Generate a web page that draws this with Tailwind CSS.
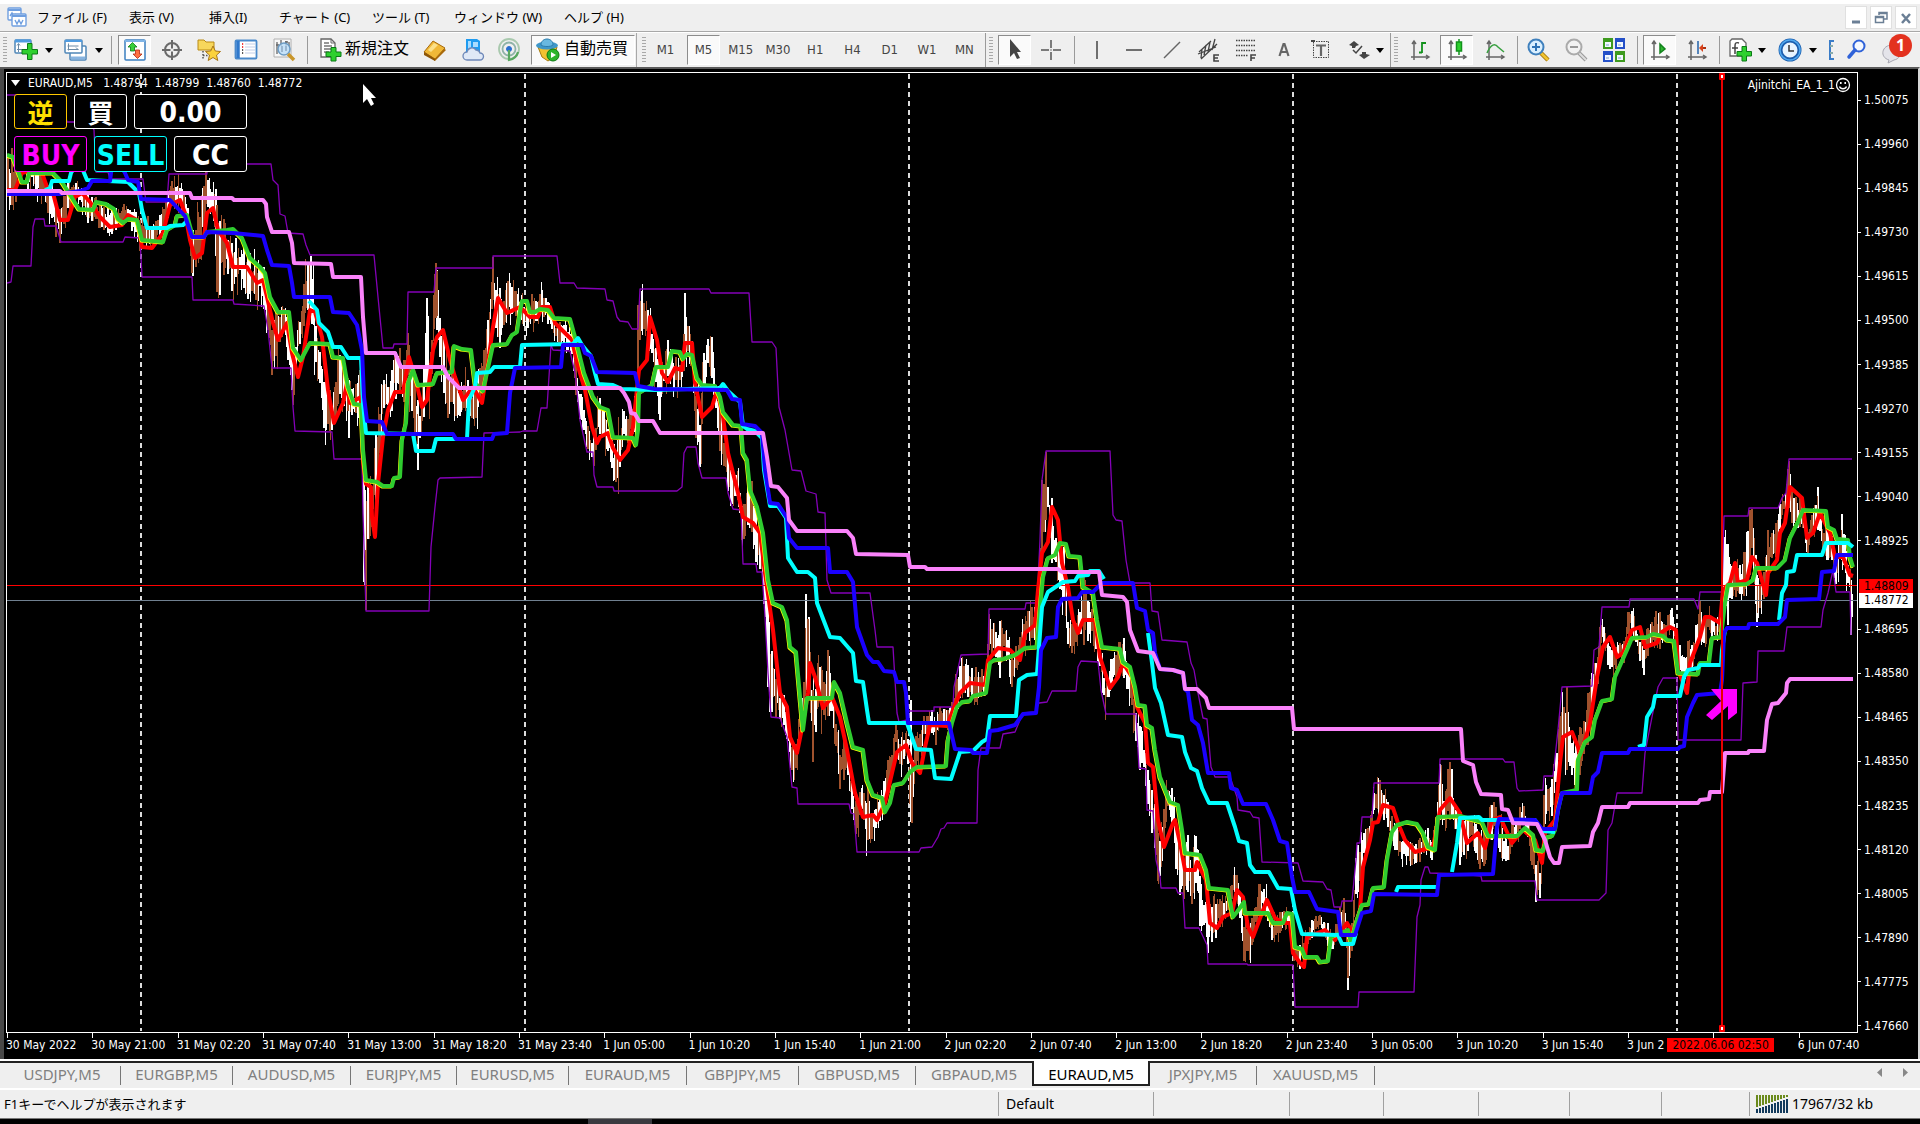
<!DOCTYPE html>
<html lang="ja">
<head>
  <meta charset="UTF-8">
  <meta name="viewport" content="width=device-width, initial-scale=1.0">
  <title>EURAUD,M5</title>
  <script src="https://cdn.jsdelivr.net/npm/@tailwindcss/browser@4"></script>
</head>
<body class="h-screen flex flex-col overflow-hidden bg-[#efefef] text-black font-['Noto_Sans','Noto_Sans_CJK_JP',sans-serif]">

  <!-- Menu bar -->
  <header class="flex items-center justify-between h-[31px] shrink-0 border-t-4 border-white pl-[7px] pr-[3px]">
    <nav class="flex items-center text-[13px] leading-[18px] whitespace-nowrap -mt-0.5">
      <svg class="w-5 h-5 mr-[10px]" viewBox="0 0 20 20" fill="#fff" stroke="#6f9fe0" stroke-width="1.4">
        <rect x="1" y="1" width="13" height="12" rx="1"/><path d="M1 3h13" stroke-width="2"/><path d="M3 9l2-3 2 4 2-3" fill="none"/>
        <rect x="5" y="7" width="14" height="12" rx="1"/><path d="M5 9h14" stroke-width="2"/><path d="M8 13l2 4 2-4 2 4 2-4" fill="none"/>
      </svg>
      <a href="#" class="w-[92px]">ファイル (F)</a>
      <a href="#" class="w-[80px]">表示 (V)</a>
      <a href="#" class="w-[70px]">挿入(I)</a>
      <a href="#" class="w-[93px]">チャート (C)</a>
      <a href="#" class="w-[82px]">ツール (T)</a>
      <a href="#" class="w-[110px]">ウィンドウ (W)</a>
      <a href="#">ヘルプ (H)</a>
    </nav>
    <div class="flex gap-[3px]">
      <button aria-label="Minimize" class="w-[22px] h-[23px] bg-white border border-[#e0e0e0] flex items-center justify-center"><svg class="w-4 h-4" viewBox="0 0 16 16"><path d="M4 12h8" stroke="#6b7f95" stroke-width="3"/></svg></button>
      <button aria-label="Restore" class="w-[22px] h-[23px] bg-white border border-[#e0e0e0] flex items-center justify-center"><svg class="w-4 h-4" viewBox="0 0 16 16" fill="none" stroke="#6b7f95" stroke-width="1.5"><path d="M6 5V2.500h8V9h-3M6 3.500h8M2.500 6.500h8v6h-8zM2.500 7.500h8"/></svg></button>
      <button aria-label="Close" class="w-[22px] h-[23px] bg-white border border-[#e0e0e0] flex items-center justify-center"><svg class="w-4 h-4" viewBox="0 0 16 16"><path d="M4 4l8 9M12 4l-8 9" stroke="#6b7f95" stroke-width="2.500"/></svg></button>
    </div>
  </header>

  <!-- Toolbar -->
  <div class="flex items-center h-[36px] shrink-0 border-t border-[#a8a8a8] shadow-[inset_0_1px_0_#fff] overflow-hidden">
    <span class="ml-[3px] w-1 h-[26px] bg-[repeating-linear-gradient(#a8a8a8_0_1px,#efefef_1px_3px)]"></span>
    <button aria-label="New chart" class="w-[38px] shrink-0 flex justify-center">
      <svg class="w-6 h-6" viewBox="0 0 24 24"><rect x="1" y="2" width="16" height="13" rx="1" fill="#fff" stroke="#4f86b8" stroke-width="1.500"/><path d="M1 3h16" stroke="#4f9be0" stroke-width="3"/><path d="M4.500 6v8M3 11.500h12M3 7.500l1.500-2 1.500 2" stroke="#6c8aa5" fill="none"/><path d="M13.500 5.500h4.500v6h5.500V16H18v5.500h-4.500V16H8v-4.500h5.500z" fill="#2fd02f" stroke="#0b7a16"/></svg>
    </button>
    <svg class="w-2 h-2 shrink-0" viewBox="0 0 8 8"><path d="M0 2h8L4 7z"/></svg>
    <button aria-label="Profiles" class="ml-1 w-[38px] shrink-0 flex justify-center">
      <svg class="w-6 h-6" viewBox="0 0 24 24" fill="#fff" stroke="#4f86b8" stroke-width="1.500"><rect x="6" y="8" width="16" height="14" rx="1"/><path d="M7 20h14" stroke="#88b4e0" stroke-width="3"/><rect x="1" y="2" width="17" height="13" rx="1"/><path d="M1 3h17" stroke="#4f9be0" stroke-width="2"/><path d="M4.500 5.500v7M3.500 8h11M3.500 11.500h11M12 9.500l2 2" stroke="#6c8aa5" stroke-width="1" fill="none"/></svg>
    </button>
    <svg class="w-2 h-2 shrink-0" viewBox="0 0 8 8"><path d="M0 2h8L4 7z"/></svg>
    <span class="ml-2 w-px h-[28px] bg-[#9a9a9a]"></span>
    <button aria-label="Market watch" class="ml-1.5 w-[33px] h-[30px] shrink-0 flex items-center justify-center bg-[#fafafa] border border-white border-t-[#8c8c8c] border-l-[#8c8c8c]">
      <svg class="w-6 h-6" viewBox="0 0 24 24"><rect x="2" y="2" width="20" height="20" rx="1" fill="#fff" stroke="#3b7fc0" stroke-width="1.500"/><path d="M2 3h20" stroke="#7fb4e6" stroke-width="2"/><path d="M9.500 4.500l4.500 4.500h-2.500v4h-4V9H5z" fill="#3ad03a" stroke="#0c7a16" stroke-width=".8"/><path d="M14.500 20.500l4.500-4.500h-2.500v-4h-4v4H10z" fill="#ff7040" stroke="#b32b10" stroke-width=".8"/></svg>
    </button>
    <button aria-label="Data window" class="ml-0.5 w-[38px] shrink-0 flex justify-center">
      <svg class="w-6 h-6" viewBox="0 0 24 24" fill="none" stroke="#6a6a6a" stroke-width="2"><circle cx="12" cy="12" r="7"/><path d="M12 2v8.500M12 13.500V22M2 12h8.500M13.500 12H22"/></svg>
    </button>
    <button aria-label="Navigator" class="w-[36px] shrink-0 flex justify-center">
      <svg class="w-6 h-6" viewBox="0 0 24 24"><path d="M1 2h6l2 2h8v8H1z" fill="#f7d75c" stroke="#b98a14"/><path d="M6 13v9M6 17.500h5" stroke="#555" stroke-width="1.500" stroke-dasharray="1.500 1.500"/><path d="M16 8l2.300 5 5.200.5-4 3.600 1.300 5.400-4.800-3-4.800 3 1.300-5.400-4-3.600 5.200-.5z" fill="#fbd23c" stroke="#a8761a"/></svg>
    </button>
    <button aria-label="Terminal" class="w-[38px] shrink-0 flex justify-center">
      <svg class="w-6 h-6" viewBox="0 0 24 24"><rect x="1.500" y="2.500" width="21" height="18" rx="1" fill="#fff" stroke="#4a8acb" stroke-width="1.800"/><path d="M4 3v17" stroke="#2f79cc" stroke-width="3.500"/><path d="M8 6h1.200M8 9h1.200" stroke="#e00" stroke-width="1.500"/><path d="M8 12h1.200M8 15h1.200" stroke="#222" stroke-width="1.500"/><path d="M11 6h10M11 9h10M11 12h10M11 15h10" stroke="#c3cfe8"/></svg>
    </button>
    <button aria-label="Strategy tester" class="w-[38px] shrink-0 flex justify-center">
      <svg class="w-6 h-6" viewBox="0 0 24 24"><path d="M2 1h17v18H2z" fill="#f8f8f8" stroke="#b0b0b0"/><path d="M5 4v12M9 2v6M14 3v5M17 4v4M4 7h3M13 4h3" stroke="#666" stroke-width="1.300"/><circle cx="12" cy="11" r="6" fill="#b9dcf7cc" stroke="#6d9cc4" stroke-width="1.500"/><path d="M10 8v6M14 8v5" stroke="#6f8ba8"/><path d="M16 16l6 6" stroke="#c9962a" stroke-width="3.500"/></svg>
    </button>
    <span class="ml-1 w-px h-[28px] bg-[#9a9a9a]"></span>
    <button class="ml-1 pl-1.5 w-[104px] shrink-0 flex items-center gap-[3px] text-[16px] leading-5 whitespace-nowrap">
      <svg class="w-6 h-6 shrink-0" viewBox="0 0 24 24"><path d="M3 1h10l4 4v14H3z" fill="#fff" stroke="#666" stroke-width="1.300"/><path d="M13 1v4h4" fill="none" stroke="#666"/><path d="M6 5h5M6 8h8M6 11h8M6 14h5" stroke="#777" stroke-width="1.500"/><path d="M13 9.500h5v4.500h5v4.500h-5V23h-5v-4.500H8V14h5z" fill="#2fd02f" stroke="#0b7a16"/></svg>
      <span class="-mt-1">新規注文</span>
    </button>
    <button aria-label="MetaEditor" class="w-[38px] shrink-0 flex justify-center">
      <svg class="w-6 h-6" viewBox="0 0 24 24"><path d="M1 14l11-10 11 8-11 11z" fill="#a8690a"/><path d="M1 14L10 3l12 7-10 11z" fill="#f0b838" stroke="#a86b0c"/><path d="M1 14l11 7v2L1 17z" fill="#8c5608"/><path d="M5 12l6-7 4 2-7 7z" fill="#fbe08a"/></svg>
    </button>
    <button aria-label="Cloud" class="w-[38px] shrink-0 flex justify-center">
      <svg class="w-6 h-6" viewBox="0 0 24 24"><path d="M5 1h11l3 2v12H5z" fill="#1e9bf0"/><path d="M7 3h3v11H7zM12 4h5v5h-5z" fill="#a9dcff"/><path d="M6 22a4 4 0 0 1 0-8 5 5 0 0 1 9-2 4 4 0 0 1 4 3 3.500 3.500 0 0 1 0 7z" fill="#dfe8f6" stroke="#6d87b8" stroke-width="1.300"/></svg>
    </button>
    <button aria-label="Signals" class="w-[34px] mr-1 shrink-0 flex justify-center">
      <svg class="w-6 h-6" viewBox="0 0 24 24" fill="none" stroke-width="1.800"><circle cx="12" cy="11" r="10" stroke="#a9c9ae"/><circle cx="12" cy="11" r="6.500" stroke="#8fb3a8"/><circle cx="12" cy="11" r="2.500" fill="#2a6fd0" stroke="#2a6fd0" stroke-width="1"/><path d="M12 12v10c5-1 8-4 9-8" stroke="#58a860" stroke-width="2.200"/></svg>
    </button>
    <button class="ml-px pl-1 w-[104px] h-[30px] shrink-0 flex items-center gap-1 text-[16px] leading-5 whitespace-nowrap bg-[#fafafa] border border-white border-t-[#8c8c8c] border-l-[#8c8c8c]">
      <svg class="w-6 h-6 shrink-0" viewBox="0 0 24 24"><path d="M2 9h19l-3 10-6 4-6-4z" fill="#f2c230" stroke="#a67c12"/><ellipse cx="11" cy="7.500" rx="11" ry="4" fill="#3f97c9"/><path d="M5 7c0-8 12-8 12 0-2 2-10 2-12 0z" fill="#69b8e0" stroke="#2c7dac"/><circle cx="17" cy="17" r="6" fill="#2cb52c" stroke="#0c7b12"/><path d="M15 14l5 3-5 3z" fill="#fff"/></svg>
      <span class="-mt-1">自動売買</span>
    </button>
    <span class="ml-px w-px h-[34px] bg-[#a8a8a8]"></span>
    <span class="ml-[5px] w-1 h-[26px] shrink-0 bg-[repeating-linear-gradient(#a8a8a8_0_1px,#efefef_1px_3px)]"></span>

    <div class="flex items-center shrink-0 text-[13px] text-[#444] font-['DejaVu_Sans_Condensed','DejaVu_Sans',sans-serif]">
      <button class="ml-px w-[37px] h-[30px]">M1</button>
      <button class="ml-[3px] w-[33px] h-[30px] bg-[#fafafa] border border-white border-t-[#8c8c8c] border-l-[#8c8c8c]">M5</button>
      <div class="ml-0.5 flex w-[261px]">
        <button class="flex-1">M15</button>
        <button class="flex-1">M30</button>
        <button class="flex-1">H1</button>
        <button class="flex-1">H4</button>
        <button class="flex-1">D1</button>
        <button class="flex-1">W1</button>
        <button class="flex-1">MN</button>
      </div>
    </div>
    <span class="ml-0.5 w-px h-[34px] bg-[#9a9a9a]"></span>
    <span class="ml-[3px] w-1 h-[26px] shrink-0 bg-[repeating-linear-gradient(#a8a8a8_0_1px,#efefef_1px_3px)]"></span>
    <button aria-label="Cursor" class="ml-[5px] w-[33px] h-[30px] shrink-0 flex items-center justify-center bg-[#fafafa] border border-white border-t-[#8c8c8c] border-l-[#8c8c8c]">
      <svg class="w-6 h-6" viewBox="0 0 24 24"><path d="M7 1v18l4-4 3 6 3-1-3-6h4z" fill="#444"/></svg>
    </button>
    <button aria-label="Crosshair" class="ml-px w-[38px] shrink-0 flex justify-center">
      <svg class="w-6 h-6" viewBox="0 0 24 24" stroke="#555" stroke-width="1.500"><path d="M12 2v8M12 14v8M2 12h8M14 12h8M11.500 12h1"/></svg>
    </button>
    <span class="ml-1 w-px h-[28px] bg-[#9a9a9a]"></span>
    <div class="ml-[3px] flex w-[262px] shrink-0">
      <button aria-label="Vertical line" class="flex-1 flex justify-center"><svg class="w-6 h-6" viewBox="0 0 24 24"><path d="M12 3v18" stroke="#444" stroke-width="1.500"/></svg></button>
      <button aria-label="Horizontal line" class="flex-1 flex justify-center"><svg class="w-6 h-6" viewBox="0 0 24 24"><path d="M4 12h16" stroke="#444" stroke-width="1.500"/></svg></button>
      <button aria-label="Trendline" class="flex-1 flex justify-center"><svg class="w-6 h-6" viewBox="0 0 24 24"><path d="M4 20L20 4" stroke="#666" stroke-width="1.500"/></svg></button>
      <button aria-label="Channel" class="flex-1 flex justify-center"><svg class="w-6 h-6" viewBox="0 0 24 24" fill="none" stroke="#444" stroke-width="1.300"><path d="M2 14L14 3M4 21L20 6M5 11l-1 9M9 7l-2 10M13 4l-2 10M18 1l-3 11M1 16l18-7" /><path d="M22 17h-5v6h5M17 20h4" stroke-width="1.600"/></svg></button>
      <button aria-label="Fibonacci" class="flex-1 flex justify-center"><svg class="w-6 h-6" viewBox="0 0 24 24" fill="none" stroke="#444" stroke-width="1.500"><path d="M2 2.500h19M2 7.500h19M2 12.500h19M2 17.500h12" stroke-dasharray="1.500 1"/><path d="M22 17h-5v6M17 20h4" stroke-width="1.600"/></svg></button>
      <button aria-label="Text" class="flex-1 flex justify-center"><svg class="w-6 h-6" viewBox="0 0 24 24" fill="none" stroke="#666" stroke-width="2.200"><path d="M7.500 18l4-12h1l4 12M9 14h6"/></svg></button>
      <button aria-label="Text label" class="flex-1 flex justify-center"><svg class="w-6 h-6" viewBox="0 0 24 24" fill="none" stroke="#444"><rect x="4.500" y="3.500" width="15" height="16" stroke-dasharray="1.500 1"/><path d="M2 2h4v2H2z" fill="#444" stroke="none"/><path d="M7 7.500h10M12 7.500V18" stroke="#666" stroke-width="2.200"/></svg></button>
    </div>
    <button aria-label="Arrows" class="ml-0.5 w-[34px] shrink-0 flex justify-center">
      <svg class="w-6 h-6" viewBox="0 0 24 24" fill="#444"><path d="M7 3l5 4-3 1-1 2H5V8L2 7z"/><path d="M17 21l-5-4 3-1v-2h4v2l4 1z"/><path d="M6 12l3 3 6-7" fill="none" stroke="#444" stroke-width="1.500"/></svg>
    </button>
    <svg class="w-2 h-2 shrink-0" viewBox="0 0 8 8"><path d="M0 2h8L4 7z"/></svg>
    <span class="ml-1.5 w-px h-[34px] bg-[#9a9a9a]"></span>
    <span class="ml-[3px] w-1 h-[26px] shrink-0 bg-[repeating-linear-gradient(#a8a8a8_0_1px,#efefef_1px_3px)]"></span>
    <button aria-label="Bar chart" class="ml-[3px] w-[38px] shrink-0 flex justify-center">
      <svg class="w-6 h-6" viewBox="0 0 24 24" fill="none" stroke="#666" stroke-width="1.500"><path d="M6 3v19M3 19h18M4 6l2-3 2 3M18 17l3 2-3 2"/><path d="M14 4v11M14 5h4M11 14.500h3" stroke="#12921c" stroke-width="1.800"/></svg>
    </button>
    <button aria-label="Candlesticks" class="ml-px w-[33px] h-[30px] shrink-0 flex items-center justify-center bg-[#fafafa] border border-white border-t-[#8c8c8c] border-l-[#8c8c8c]">
      <svg class="w-6 h-6" viewBox="0 0 24 24" fill="none" stroke="#666" stroke-width="1.500"><path d="M6 3v19M3 19h18M4 6l2-3 2 3M18 17l3 2-3 2"/><path d="M14 1v16" stroke="#12921c"/><rect x="11.500" y="4" width="5" height="9" fill="#2fd02f" stroke="#12921c"/></svg>
    </button>
    <button aria-label="Line chart" class="ml-[3px] w-[38px] shrink-0 flex justify-center">
      <svg class="w-6 h-6" viewBox="0 0 24 24" fill="none" stroke="#666" stroke-width="1.500"><path d="M6 3v19M3 19h18M4 6l2-3 2 3M18 17l3 2-3 2"/><path d="M4 15c4-9 8-10 11-6l6 5" stroke="#38a040"/></svg>
    </button>
    <span class="ml-[3px] w-px h-[28px] bg-[#9a9a9a]"></span>
    <button aria-label="Zoom in" class="ml-px w-[38px] shrink-0 flex justify-center">
      <svg class="w-6 h-6" viewBox="0 0 24 24"><path d="M15 15l7 7" stroke="#a67a12" stroke-width="4.500"/><path d="M15 15l7 7" stroke="#f0c430" stroke-width="2.500"/><circle cx="10" cy="9" r="7.500" fill="#d9efff" stroke="#3f80bd" stroke-width="2"/><path d="M10 5v8M6 9h8" stroke="#2f73b5" stroke-width="2"/></svg>
    </button>
    <button aria-label="Zoom out" class="w-[38px] shrink-0 flex justify-center">
      <svg class="w-6 h-6" viewBox="0 0 24 24"><path d="M15 15l7 7" stroke="#999" stroke-width="4"/><path d="M15 15l7 7" stroke="#ddd" stroke-width="2"/><circle cx="10" cy="9" r="7.500" fill="#f2f2f2" stroke="#aaa" stroke-width="2"/><path d="M6 9h8" stroke="#999" stroke-width="2"/></svg>
    </button>
    <button aria-label="Tile windows" class="w-[38px] shrink-0 flex justify-center">
      <svg class="w-6 h-6" viewBox="0 0 24 24"><path d="M1 0h10v11H1zM13 13h10v11H13z" fill="#3d9a1e"/><path d="M13 0h10v11H13zM1 13h10v11H1z" fill="#2450c8"/><path d="M3 4h6v5H3zM15 4h6v5h-6zM3 17h6v5H3zM15 17h6v5h-6z" fill="#f2f8ff"/><path d="M4 7h3M16 7h3M4 20h3M16 20h3" stroke="#7aa0c8"/></svg>
    </button>
    <span class="ml-1 w-px h-[28px] bg-[#9a9a9a]"></span>
    <button aria-label="Auto scroll" class="ml-[5px] w-[33px] h-[30px] shrink-0 flex items-center justify-center bg-[#fafafa] border border-white border-t-[#8c8c8c] border-l-[#8c8c8c]">
      <svg class="w-6 h-6" viewBox="0 0 24 24" fill="none" stroke="#666" stroke-width="1.500"><path d="M6 3v19M3 19h18M4 6l2-3 2 3M18 17l3 2-3 2"/><path d="M12 6l5 5-5 4z" fill="#2fb52f" stroke="#12821c"/></svg>
    </button>
    <button aria-label="Chart shift" class="ml-0.5 w-[38px] shrink-0 flex justify-center">
      <svg class="w-6 h-6" viewBox="0 0 24 24" fill="none" stroke="#666" stroke-width="1.500"><path d="M6 3v19M3 19h18M4 6l2-3 2 3M18 17l3 2-3 2"/><path d="M13 3v13" stroke="#2060a8"/><path d="M21 10h-4" stroke="#b03010" stroke-width="2"/><path d="M18 6l-4 4 4 4z" fill="#d8431c" stroke="none"/></svg>
    </button>
    <span class="ml-[3px] w-px h-[28px] bg-[#9a9a9a]"></span>
    <button aria-label="Indicators" class="ml-0.5 w-[36px] shrink-0 flex justify-center">
      <svg class="w-6 h-6" viewBox="0 0 24 24"><path d="M4 1h10l4 4v13H2V3z" fill="#fff" stroke="#666" stroke-width="1.300"/><path d="M11 5c-3-1-4 0-4 3v8M4 10h6" fill="none" stroke="#444" stroke-width="1.500"/><path d="M14 8.500h4.500v5h5V18h-5v5H14v-5H9v-4.500h5z" fill="#2fd02f" stroke="#0b7a16"/></svg>
    </button>
    <svg class="w-2 h-2 shrink-0" viewBox="0 0 8 8"><path d="M0 2h8L4 7z"/></svg>
    <button aria-label="Periods" class="ml-[5px] w-[38px] shrink-0 flex justify-center">
      <svg class="w-6 h-6" viewBox="0 0 24 24"><circle cx="12" cy="12" r="9.500" fill="#e8f5ff" stroke="#1c5fae" stroke-width="4"/><circle cx="12" cy="12" r="10" fill="none" stroke="#4fa8ee" stroke-width="1.500"/><path d="M11 7v6h5" fill="none" stroke="#333" stroke-width="1.500"/></svg>
    </button>
    <svg class="w-2 h-2 shrink-0" viewBox="0 0 8 8"><path d="M0 2h8L4 7z"/></svg>
    <button aria-label="Templates" class="ml-[10px] w-2 shrink-0">
      <svg class="w-2 h-6" viewBox="0 0 8 24" fill="none" stroke="#3a7cc8" stroke-width="2"><path d="M7 3H3v18h4"/><path d="M3 8h3M3 15h3" stroke="#8aa"/></svg>
    </button>
    <button aria-label="Search" class="ml-[3px] w-[38px] shrink-0 flex justify-center">
      <svg class="w-6 h-6" viewBox="0 0 24 24"><circle cx="14" cy="8" r="5.500" fill="#f4f8ff" stroke="#2f62d8" stroke-width="2"/><path d="M10 12l-6 7" stroke="#2f62d8" stroke-width="3.500" stroke-linecap="round"/></svg>
    </button>
    <button aria-label="Messages" class="relative w-[40px] h-[32px] shrink-0">
      <svg class="w-[30px] h-[32px] ml-1" viewBox="0 0 30 32"><path d="M12 11c10 0 12 13 2 15l-6 3 1-3c-10-3-7-15 3-15z" fill="#e4e4ea" stroke="#a8a8b2"/></svg>
      <span class="absolute left-[13px] top-0 size-[23px] rounded-full bg-[#e3321f] text-white text-base leading-[22px] font-bold text-center">1</span>
    </button>
  </div>

  <!-- Chart window -->
  <main class="relative flex-1 min-h-0 flex flex-col bg-black border-t-2 border-t-[#5a5a5a] border-r-2 border-r-[#d8d8d8] pt-[3px] text-white text-[12px] leading-[14px] font-['DejaVu_Sans_Condensed','DejaVu_Sans',sans-serif]">
    <span class="absolute left-0 top-0 bottom-0 w-1 bg-[#484848]"></span>
    <div class="flex flex-1 min-h-0 pl-1.5">
      <div class="relative flex-1 min-w-0 border border-white">
        <svg class="absolute inset-0 w-full h-full" viewBox="7 73 1850 959" preserveAspectRatio="none" fill="none" stroke-linejoin="round">
          <path d="M141 74V1031M525 74V1031M909 74V1031M1293 74V1031M1677 74V1031" stroke="#dcdcdc" stroke-width="2" stroke-dasharray="5 4"/>
          <g shape-rendering="crispEdges">
            <path id="bear" stroke="#fff" stroke-width="1.500"/>
            <path id="bull" stroke="#a0522d" stroke-width="1.500"/>
            <path d="M7 600.500H1857" stroke="#708090"/>
            <path d="M7 585.500H1857" stroke="#ff0000"/>
          </g>
          <g stroke="#8400b8" stroke-width="1.300">
            <polyline points="7,95 60,95 67,122 75,122 90,122 94,130 96,172 108,172 110,179 143,179 146,202 167,202 169,174 207,174 207,164 271,164 273,180 278,185 280,214 285,216 288,233 303,234 306,245 310,255 374,255 378,297 383,348 393,348 394,344 407,344 408,292 434,292 436,268 493,268 493,256 557,256 560,283 574,283 577,288 605,289 607,300 613,301 617,317 620,321 628,322 632,329 638,329 640,289 709,289 711,293 749,293 752,342 772,342 776,348 779,407 785,430 792,470 801,471 806,491 816,494 818,512 825,513 827,580 831,593 870,593 875,630 877,647 893,647 897,713 899,722 907,720 907,711 934,711 934,707 953,707 954,687 961,655 988,654 989,609 1025,609 1026,603 1037,603 1040,540 1042,480 1046,451 1110,451 1113,515 1116,520 1122,521 1126,560 1130,583 1150,583 1152,611 1158,612 1162,640 1187,642 1191,663 1194,670 1198,693 1203,718 1207,719 1211,767 1215,777 1230,777 1237,797 1238,810 1250,812 1253,817 1259,818 1262,862 1298,863 1303,881 1323,882 1327,889 1331,890 1334,907 1341,907 1342,901 1352,901 1356,860 1357,843 1360,843 1362,817 1372,817 1374,783 1439,783 1440,759 1503,759 1505,762 1514,762 1517,788 1519,791 1543,790 1544,776 1553,776 1558,730 1562,687 1592,686 1594,650 1599,647 1602,607 1629,607 1630,599 1694,599 1698,609 1700,592 1722,592 1724,516 1748,516 1749,508 1778,508 1782,498 1786,493 1789,459 1852,459"/>
            <polyline points="7,283 11,282 13,266 31,266 33,227 35,219 44,219 45,226 56,226 61,242 123,242 125,237 140,238 142,277 192,277 193,300 233,300 234,304 264,306 268,330 272,368 291,368 293,407 295,431 332,432 334,459 362,459 363,513 366,611 429,611 431,547 435,507 438,480 440,478 482,477 484,433 520,432 523,431 537,431 541,408 547,408 551,345 553,350 570,351 575,373 580,420 587,452 593,452 594,475 597,487 613,487 614,491 677,491 682,487 684,453 687,447 696,447 698,463 702,478 726,478 728,493 733,509 741,510 743,564 756,564 757,572 762,572 765,617 768,673 771,717 780,718 787,737 792,787 797,788 798,804 849,804 851,813 854,814 857,852 919,852 921,848 932,847 938,837 941,829 944,828 947,823 977,823 978,770 981,748 1000,748 1003,734 1015,732 1023,713 1035,712 1039,703 1047,702 1052,691 1076,691 1078,667 1081,661 1098,662 1101,690 1106,714 1136,714 1139,768 1146,769 1147,810 1153,811 1156,860 1160,877 1161,888 1176,888 1178,893 1183,893 1185,928 1199,928 1207,945 1208,964 1247,964 1248,965 1293,965 1295,1007 1358,1007 1359,992 1414,992 1417,917 1420,905 1421,880 1425,867 1428,867 1430,873 1460,874 1481,876 1482,881 1535,881 1537,900 1599,900 1606,893 1608,830 1612,823 1617,793 1642,793 1645,753 1652,717 1658,687 1663,678 1677,678 1678,740 1741,740 1743,683 1757,682 1758,651 1784,651 1787,627 1821,627 1823,610 1828,593 1833,570 1836,592 1850,592 1851,635"/>
          </g>
          <g stroke-width="4">
            <polyline stroke="#ff0000" points="7,190 15,190 22,173 33,170 42,173 47,187 53,193 60,220 68,220 75,197 82,193 90,202 100,217 110,227 122,225 128,215 137,220 142,247 152,248 163,233 170,205 180,200 185,213 190,240 195,258 202,253 207,213 213,208 218,230 227,243 233,267 247,267 257,283 263,280 267,297 273,323 278,340 287,323 292,353 298,377 303,357 310,310 315,312 322,337 328,390 334,423 343,403 347,383 350,403 361,397 363,463 366,484 371,487 372,517 375,537 378,483 383,437 388,410 395,392 403,392 409,357 415,377 422,407 427,400 433,350 437,337 443,330 450,360 455,377 463,400 473,387 482,403 487,370 493,327 498,298 507,313 520,307 530,317 538,317 542,307 550,307 555,323 572,340 577,363 585,390 592,427 597,443 600,437 608,433 613,448 620,460 628,450 633,427 639,370 647,360 650,317 657,340 662,373 668,382 675,368 682,370 685,343 692,343 695,383 702,417 712,407 717,390 723,417 728,453 738,493 743,517 753,523 760,533 765,573 773,630 780,693 787,707 790,737 797,753 803,723 808,693 810,663 815,677 823,708 832,697 840,717 847,750 855,793 863,817 873,815 877,820 885,803 892,773 897,752 906,745 912,763 920,773 925,747 930,725 947,726 953,710 960,693 970,683 985,685 988,660 998,648 1010,650 1020,660 1025,633 1035,625 1038,590 1042,553 1048,542 1052,507 1058,520 1062,563 1068,587 1073,620 1078,633 1083,620 1095,620 1100,657 1110,688 1118,677 1123,663 1132,677 1137,707 1145,723 1148,763 1153,767 1158,820 1164,847 1173,823 1175,820 1180,843 1185,870 1195,870 1197,862 1206,880 1210,923 1217,928 1223,917 1232,913 1237,890 1243,897 1248,927 1253,937 1262,913 1267,900 1275,918 1283,923 1290,923 1293,953 1300,963 1304,967 1307,937 1325,930 1335,940 1347,923 1353,933 1360,910 1363,867 1370,840 1373,823 1378,822 1383,805 1393,808 1398,823 1405,840 1415,852 1433,847 1440,810 1450,798 1460,813 1467,843 1478,833 1485,848 1492,820 1500,817 1512,843 1523,830 1535,840 1542,863 1545,833 1555,820 1560,763 1563,737 1572,732 1578,747 1580,757 1590,723 1597,677 1603,647 1610,637 1617,657 1623,653 1632,630 1640,627 1645,647 1657,643 1662,632 1670,627 1676,630 1678,670 1687,693 1690,663 1700,637 1705,617 1710,617 1720,623 1723,590 1730,583 1735,563 1738,583 1747,580 1752,557 1757,563 1766,595 1768,573 1777,560 1780,533 1785,523 1790,487 1802,498 1807,538 1813,533 1820,513 1830,533 1835,557 1843,557 1850,575 1853,576"/>
            <use href="#slow" stroke="#ffff00" stroke-width="3" x="-1" y="1"/>
            <g stroke="#2fcc2f"><polyline id="slow" points="7,155 13,157 22,182 27,182 29,173 53,173 62,182 79,209 93,210 96,202 106,204 114,209 118,219 123,223 128,219 137,220 142,240 163,242 167,230 175,225 177,216 187,215 191,230 193,237 204,237 207,232 227,230 233,229 242,238 250,258 260,267 265,273 270,297 278,312 289,312 293,348 301,360 310,343 330,344 333,357 343,358 348,387 354,404 361,405 363,450 366,480 377,482 383,486 392,486 394,478 400,477 402,440 406,423 408,383 413,370 418,385 433,384 437,373 452,372 454,346 462,349 471,350 475,383 483,391 493,345 507,344 512,335 517,332 520,312 522,301 527,301 530,312 535,312 540,309 548,310 554,318 570,319 575,337 584,373 593,397 600,407 608,410 613,437 633,438 636,445 638,430 639,393 652,385 656,367 668,367 672,351 680,352 683,359 687,354 692,355 697,378 702,385 715,386 720,397 723,412 733,425 741,426 743,453 747,460 750,490 757,507 763,533 768,580 773,603 782,607 787,620 790,647 796,652 800,697 803,730 807,698 832,698 834,682 840,693 847,723 853,747 863,750 867,780 873,795 882,798 885,812 890,803 894,785 903,783 910,772 917,767 946,766 948,740 952,723 957,707 962,702 970,701 973,696 986,693 990,663 994,660 1003,659 1015,655 1025,648 1037,647 1040,610 1043,577 1048,558 1055,555 1060,543 1066,544 1069,556 1080,557 1083,587 1093,593 1097,620 1102,647 1120,649 1123,662 1130,667 1135,687 1138,705 1145,706 1147,725 1152,728 1155,750 1160,777 1170,802 1178,805 1182,830 1185,853 1200,855 1206,870 1209,888 1228,890 1233,917 1237,912 1244,902 1245,913 1268,913 1273,923 1283,923 1287,913 1292,914 1295,947 1302,949 1305,957 1317,957 1320,962 1328,961 1331,937 1348,930 1351,942 1357,920 1362,905 1369,904 1373,888 1384,887 1387,860 1392,832 1397,825 1407,822 1417,824 1423,833 1428,847 1435,850 1438,817 1460,816 1482,822 1488,836 1517,836 1525,828 1533,835 1536,850 1543,851 1547,837 1552,836 1555,830 1558,810 1562,793 1577,790 1578,760 1585,742 1592,737 1595,720 1602,701 1612,699 1615,677 1627,650 1632,638 1647,637 1653,634 1663,636 1667,640 1674,641 1678,673 1698,674 1700,663 1709,663 1712,638 1721,637 1725,603 1728,585 1747,584 1753,580 1756,568 1777,568 1785,560 1790,538 1798,522 1803,510 1826,511 1828,527 1834,530 1837,539 1848,540 1850,557 1853,567"/></g>
            <g stroke="#00ffff">
              <polyline points="45,190 50,188 52,181 69,181 71,173 75,167 82,168 87,180 128,182 133,187 139,193 142,210 147,228 167,228 170,226 183,225 187,221"/>
              <polyline points="309,301 317,310 319,323 328,332 333,347 341,347 348,358 361,358 363,403 366,433 413,434 416,451 433,451 436,439 467,439 469,400 475,387 477,373 490,372 494,367 520,367 522,345 573,344 578,338 582,345 591,356 595,373 598,384 613,385 622,389 655,390 720,388 723,384 728,391 740,402 743,426 747,429 755,431 762,438 764,470 770,506 778,506 786,518 788,558 797,572 808,572 815,578 817,603 830,637 840,638 853,653 856,681 863,682 867,710 869,723 907,723 916,749 931,750 935,778 951,779 960,752 973,751 982,742 987,739 990,716 1016,716 1019,680 1027,675 1037,674 1039,647 1042,607 1048,592 1063,582 1075,581 1078,576 1088,575 1090,571 1099,571 1104,579"/>
              <polyline points="1148,633 1152,663 1155,688 1161,703 1168,735 1182,737 1185,752 1191,768 1197,771 1202,788 1209,803 1227,803 1235,827 1239,841 1247,843 1250,865 1255,872 1269,872 1278,888 1291,889 1295,910 1302,934 1338,935 1342,944 1353,944 1356,933"/>
              <polyline points="1396,892 1398,887 1436,887"/>
              <polyline points="1452,872 1457,843 1460,818 1479,817 1482,820 1535,820 1542,831 1555,832"/>
              <polyline points="1638,747 1644,745 1647,717 1653,707 1655,696 1680,696 1684,677 1688,670 1698,668 1700,665 1721,665 1722,650 1725,630"/>
              <polyline points="1779,620 1782,593 1786,585 1787,572 1794,571 1797,555 1822,555 1826,543 1848,543 1853,547"/>
            </g>
            <polyline stroke="#1a00ff" points="7,194 59,194 80,191 88,188 92,181 110,181 112,165 120,165 125,173 128,180 138,182 141,199 170,200 185,216 192,237 204,237 207,232 233,233 263,236 267,250 272,265 289,266 292,283 294,297 330,297 333,312 349,313 357,325 362,350 364,397 367,421 382,422 387,434 453,434 456,439 492,439 494,434 507,433 510,393 515,368 561,367 563,345 582,345 585,353 591,356 597,372 635,373 638,386 655,389 727,390 732,399 740,400 742,424 755,426 762,433 765,470 770,503 778,504 787,518 789,538 797,548 828,548 830,572 847,572 853,582 857,627 867,655 873,662 878,662 884,671 894,672 897,682 904,682 906,693 908,723 949,723 955,749 971,750 973,753 987,753 990,731 998,730 1015,725 1023,714 1036,713 1039,687 1041,650 1047,638 1056,637 1058,607 1062,599 1078,598 1082,592 1093,592 1102,583 1133,583 1137,608 1145,611 1148,630 1153,633 1155,653 1160,669 1173,670 1183,673 1185,689 1188,692 1192,720 1198,725 1203,743 1208,773 1229,773 1231,788 1237,790 1243,804 1266,804 1273,820 1280,841 1287,843 1292,877 1295,892 1309,892 1317,909 1338,912 1341,935 1355,935 1362,913 1371,911 1374,894 1437,895 1439,875 1493,874 1497,827 1499,819 1535,820 1542,829 1555,829 1558,810 1562,793 1590,793 1593,777 1598,772 1602,753 1628,753 1630,749 1678,749 1680,747 1684,746 1687,717 1693,703 1697,695 1720,693 1722,680 1724,633 1727,628 1748,628 1749,624 1778,624 1785,617 1787,600 1819,599 1822,572 1834,571 1837,555 1853,555"/>
            <polyline stroke="#fa82fa" points="7,191 60,191 62,193 190,193 192,198 232,198 234,200 263,200 266,204 267,217 272,232 289,232 292,243 294,263 331,264 333,277 361,277 363,317 366,353 395,353 401,367 443,367 448,377 459,388 620,388 624,393 629,402 631,413 635,414 639,421 653,421 660,433 763,433 767,457 771,486 778,487 787,498 789,520 797,531 847,531 853,538 856,554 908,555 910,567 925,567 927,569 1058,569 1062,572 1099,572 1102,595 1123,597 1127,602 1130,630 1138,651 1153,653 1160,669 1173,670 1183,673 1185,689 1197,689 1206,698 1209,708 1292,708 1294,729 1461,729 1463,761 1473,765 1476,782 1481,794 1501,795 1502,809 1508,810 1513,823 1537,824 1545,840 1550,857 1554,863 1559,863 1562,847 1590,846 1593,832 1598,823 1602,807 1628,807 1630,803 1698,803 1700,800 1709,799 1710,792 1722,792 1725,753 1748,753 1749,751 1764,751 1767,720 1772,704 1778,703 1786,693 1787,683 1790,679 1853,679"/>
          </g>
          <path d="M1711 689h26v24l-9 7v-14l-16 14-6-5 15-14z" fill="#ff00ff"/>
          <path d="M1722 74V1031" stroke="#e80000" stroke-width="2"/>
          <path d="M1720 74h4v5h-4zM1720 1026h4v5h-4z" fill="#fff" stroke="#ff0000" stroke-width="2"/>
          <path d="M363 84v19l4-4 4 7 3-2-3-6h5z" fill="#fff"/>
        </svg>

        <div class="absolute left-1 top-[3px] flex items-center gap-2 whitespace-pre">
          <svg class="w-[9px] h-[6px]" viewBox="0 0 9 6" fill="#fff"><path d="M0 0h9L4.500 6z"/></svg>
          <span>EURAUD,M5   1.48794  1.48799  1.48760  1.48772</span>
        </div>
        <div class="absolute right-[6px] top-1 flex items-center">
          <span>Ajinitchi_EA_1_1</span>
          <svg class="w-4 h-4" viewBox="0 0 16 16" fill="none" stroke="#fff" stroke-width="1.300"><circle cx="8" cy="8" r="6.500"/><path d="M4.500 9.500c1 3 6 3 7 0"/><path d="M5.800 5v2M10.200 5v2" stroke-width="1.600"/></svg>
        </div>

        <div class="absolute left-[7px] top-[21px] w-[233px] flex flex-col gap-[7px] text-[28px] leading-[32px] font-bold">
          <div class="flex gap-[7px]">
            <button class="w-[53px] h-[35px] bg-black border rounded-[3px] border-[#ffc800] text-[#ffe000] text-[26px] font-['Noto_Sans_CJK_JP',sans-serif]">逆</button>
            <button class="w-[53px] h-[35px] bg-black border rounded-[3px] border-white text-[26px] font-['Noto_Sans_CJK_JP',sans-serif]">買</button>
            <button class="flex-1 h-[35px] pt-0.5 bg-black border rounded-[3px] border-white">0.00</button>
          </div>
          <div class="flex gap-[7px]">
            <button class="flex-1 h-[36px] pt-[3px] bg-black border rounded-[3px] border-[#ff00ff] text-[#ff00ff]">BUY</button>
            <button class="flex-1 h-[36px] pt-[3px] bg-black border rounded-[3px] border-[#00ffff] text-[#00ffff]">SELL</button>
            <button class="flex-1 h-[36px] pt-[3px] bg-black border rounded-[3px] border-white">CC</button>
          </div>
        </div>
      </div>

      <!-- Price scale -->
      <div class="relative w-[60px] shrink-0">
        <ol id="prices" class="flex flex-col justify-between h-full pt-[21px] -mb-[3px]"></ol>
        <span class="absolute left-px right-[5px] top-[52.8%] h-[14px] pl-[5px] bg-[#ff0000] text-black">1.48809</span>
        <span class="absolute left-px right-[5px] top-[54.2%] h-[15px] pl-[5px] bg-white text-black">1.48772</span>
      </div>
    </div>

    <!-- Time scale -->
    <div class="relative h-[26px] shrink-0 ml-[6px] mr-[35px]">
      <ol id="times" class="grid grid-cols-[repeat(22,minmax(0,1fr))] whitespace-nowrap"></ol>
      <span class="absolute left-[88.5%] top-[5px] w-[107px] h-[14px] bg-[#ff0000] text-black text-center">2022.06.06 02:50</span>
    </div>
  </main>

  <!-- Chart tabs -->
  <nav class="flex items-start h-[31px] shrink-0 border-t-2 border-white border-b-2 text-[15px] leading-[22px] text-[#808080] whitespace-nowrap">
    <div class="flex-1 flex h-[27px] items-start border-t-2 border-[#222]">
      <a href="#" class="w-[121px] h-[19px] mt-[3px] leading-[17px] pl-1 text-center border-r border-[#777]">USDJPY,M5</a>
      <a href="#" class="w-[112px] h-[19px] mt-[3px] leading-[17px] text-center border-r border-[#777]">EURGBP,M5</a>
      <a href="#" class="w-[118px] h-[19px] mt-[3px] leading-[17px] text-center border-r border-[#777]">AUDUSD,M5</a>
      <a href="#" class="w-[106px] h-[19px] mt-[3px] leading-[17px] text-center border-r border-[#777]">EURJPY,M5</a>
      <a href="#" class="w-[112px] h-[19px] mt-[3px] leading-[17px] text-center border-r border-[#777]">EURUSD,M5</a>
      <a href="#" class="w-[118px] h-[19px] mt-[3px] leading-[17px] text-center border-r border-[#777]">EURAUD,M5</a>
      <a href="#" class="w-[112px] h-[19px] mt-[3px] leading-[17px] text-center border-r border-[#777]">GBPJPY,M5</a>
      <a href="#" class="w-[117px] h-[19px] mt-[3px] leading-[17px] text-center border-r border-[#777]">GBPUSD,M5</a>
      <a href="#" class="w-[116px] h-[19px] mt-[3px] leading-[17px] text-center">GBPAUD,M5</a>
      <a href="#" class="w-[118px] h-[25px] -mt-0.5 leading-[26px] text-center bg-white text-black border-2 border-t-0 border-[#222]">EURAUD,M5</a>
      <a href="#" class="w-[107px] h-[19px] mt-[3px] leading-[17px] text-center border-r border-[#777]">JPXJPY,M5</a>
      <a href="#" class="w-[118px] h-[19px] mt-[3px] leading-[17px] text-center border-r border-[#777]">XAUUSD,M5</a>
      <div class="ml-auto mr-3 mt-[5px] flex gap-[21px]">
        <button aria-label="Scroll tabs left"><svg class="w-[5px] h-[9px]" viewBox="0 0 5 9"><path d="M5 0v9L0 4.500z" fill="#888"/></svg></button>
        <button aria-label="Scroll tabs right"><svg class="w-[5px] h-[9px]" viewBox="0 0 5 9"><path d="M0 0v9l5-4.500z" fill="#888"/></svg></button>
      </div>
    </div>
  </nav>

  <!-- Status bar -->
  <footer class="flex items-end h-[28px] pb-0.5 shrink-0 text-[14px] leading-6 whitespace-nowrap">
    <span class="flex-1 pl-1 text-[13px]">F1キーでヘルプが表示されます</span>
    <span class="w-[155px] h-6 pl-[7px] border-l border-[#a0a0a0]">Default</span>
    <span class="w-[136px] h-6 border-l border-[#a0a0a0]"></span>
    <span class="w-[94px] h-6 border-l border-[#a0a0a0]"></span>
    <span class="w-[95px] h-6 border-l border-[#a0a0a0]"></span>
    <span class="w-[91px] h-6 border-l border-[#a0a0a0]"></span>
    <span class="w-[92px] h-6 border-l border-[#a0a0a0]"></span>
    <span class="w-[88px] h-6 border-l border-[#a0a0a0]"></span>
    <span class="w-[171px] h-6 pl-[6px] flex items-center gap-1 border-l border-[#a0a0a0]">
      <svg class="w-8 h-[18px]" viewBox="0 0 32 18" stroke-width="2"><path d="M1 0v12M4 0v11M7 0v10M10 0v9M13 0v8M16 0v7M19 0v6M22 0v5M25 0v4M28 0v3M31 0v2" stroke="#6a8a1c"/><path d="M1 14v4M4 13v5M7 12v6M10 11v7M13 10v8M16 9v9M19 8v10M22 7v11M25 6v12M28 5v13M31 4v14" stroke="#123a5c"/></svg>
      17967/32 kb
    </span>
  </footer>
  <div class="h-[6px] shrink-0 bg-black border-t border-[#777]"><div class="ml-[588px] w-16 h-full bg-[#3a3a40]"></div></div>

  <script>
    // price scale, one label every 115 points; the slot under the markers stays empty
    const prices = document.getElementById('prices');
    for (let i = 0; i < 22; i++) {
      const li = document.createElement('li');
      li.className = 'flex items-center h-[14px] gap-[3px]' + (i === 11 ? ' invisible' : '');
      li.innerHTML = '<span class="w-[3px] h-px bg-white"></span>' + ((150075 - 115 * i) / 100000).toFixed(5);
      prices.appendChild(li);
    }

    const times = document.getElementById('times');
    ['30 May 2022', '30 May 21:00', '31 May 02:20', '31 May 07:40', '31 May 13:00', '31 May 18:20', '31 May 23:40',
      '1 Jun 05:00', '1 Jun 10:20', '1 Jun 15:40', '1 Jun 21:00', '2 Jun 02:20', '2 Jun 07:40', '2 Jun 13:00',
      '2 Jun 18:20', '2 Jun 23:40', '3 Jun 05:00', '3 Jun 10:20', '3 Jun 15:40', '3 Jun 2', '', '6 Jun 07:40'
    ].forEach(t => {
      const li = document.createElement('li');
      li.innerHTML = '<span class="block ml-px w-px h-[5px] bg-white"></span>' + t;
      times.appendChild(li);
    });

    // x, high, low
    const range = [[7,155,215],[12,160,220],[20,140,175],[30,150,185],[44,170,200],[48,180,215],[60,210,238],[70,180,215],[78,178,205],[90,200,220],[110,210,236],[128,204,222],[140,215,245],[152,225,250],[165,200,225],[170,185,215],[180,180,205],[187,200,235],[193,220,275],[200,200,260],[205,170,240],[208,172,205],[214,180,230],[217,205,290],[226,225,270],[234,245,290],[240,245,280],[247,255,300],[252,260,305],[260,260,300],[265,280,315],[272,315,367],[285,300,340],[293,345,400],[300,310,350],[305,270,330],[311,256,320],[318,330,390],[325,370,430],[332,400,432],[338,350,410],[345,360,420],[350,380,430],[355,390,415],[361,360,420],[363,450,510],[365,480,610],[367,500,555],[374,460,520],[378,420,480],[384,375,410],[392,370,420],[395,345,395],[403,360,400],[408,330,390],[415,385,430],[418,400,475],[422,390,440],[426,300,420],[430,360,400],[434,290,350],[437,270,330],[442,325,380],[446,360,420],[452,370,410],[460,380,430],[466,375,420],[473,390,430],[480,370,410],[486,330,380],[490,290,340],[493,257,300],[496,285,335],[502,300,345],[508,280,320],[514,288,315],[522,300,330],[530,300,330],[538,300,320],[541,288,320],[549,300,320],[555,320,345],[565,320,345],[572,330,360],[577,370,410],[583,400,440],[590,430,455],[594,440,475],[598,390,440],[604,400,440],[610,430,460],[614,450,490],[619,430,485],[624,410,440],[628,413,440],[632,410,435],[636,400,435],[638,310,370],[641,289,330],[645,295,340],[650,310,350],[655,345,390],[660,360,410],[668,345,380],[675,355,390],[683,360,385],[685,295,370],[692,335,370],[696,400,450],[701,400,478],[703,350,410],[708,340,370],[713,345,390],[718,395,440],[724,430,475],[732,470,508],[738,470,500],[743,500,560],[748,480,520],[756,500,570],[762,535,575],[766,580,630],[770,650,715],[776,670,710],[782,700,725],[787,700,740],[791,740,780],[797,740,780],[800,700,730],[804,690,720],[806,594,700],[809,620,680],[813,690,765],[819,650,710],[824,670,730],[829,646,700],[835,710,750],[840,750,783],[847,745,770],[852,780,815],[856,800,850],[862,780,810],[866,785,840],[870,810,845],[876,800,830],[882,790,815],[887,765,800],[893,740,780],[896,720,750],[901,740,770],[907,715,760],[911,780,820],[914,750,780],[920,730,760],[924,715,740],[930,712,730],[936,715,740],[941,710,725],[948,705,725],[953,700,720],[958,670,705],[962,655,700],[967,660,695],[973,670,710],[980,665,700],[986,670,705],[989,612,660],[994,620,655],[1000,630,670],[1006,620,650],[1012,660,690],[1017,650,670],[1024,620,650],[1028,605,640],[1036,605,640],[1039,560,600],[1042,480,560],[1045,455,520],[1048,480,520],[1053,520,570],[1060,540,590],[1064,560,610],[1069,620,660],[1075,620,650],[1082,590,640],[1088,590,630],[1094,610,650],[1100,640,670],[1105,680,714],[1112,650,690],[1120,640,670],[1124,645,680],[1130,670,700],[1138,710,760],[1143,730,770],[1148,765,810],[1155,800,850],[1160,830,885],[1165,800,840],[1168,780,810],[1173,795,830],[1178,820,880],[1184,850,900],[1188,815,900],[1192,870,910],[1196,820,880],[1202,890,930],[1208,900,945],[1214,890,940],[1220,895,920],[1226,895,920],[1231,880,910],[1235,865,890],[1240,895,920],[1245,920,960],[1250,920,960],[1256,900,930],[1261,880,910],[1267,890,920],[1273,920,945],[1278,915,940],[1284,905,925],[1290,915,925],[1294,940,970],[1300,945,965],[1307,930,950],[1314,915,935],[1320,915,930],[1327,925,945],[1333,935,955],[1340,905,930],[1345,905,930],[1349,930,990],[1353,900,940],[1356,865,910],[1360,835,890],[1365,820,860],[1370,820,850],[1374,785,820],[1380,785,820],[1385,790,820],[1392,820,845],[1400,835,860],[1408,840,862],[1416,845,865],[1424,830,850],[1432,835,860],[1437,800,840],[1440,762,820],[1445,795,835],[1450,765,820],[1455,795,840],[1461,820,870],[1466,815,850],[1472,815,845],[1480,825,870],[1485,840,870],[1490,795,835],[1496,800,830],[1500,820,860],[1508,840,865],[1515,820,845],[1524,805,825],[1530,820,850],[1536,850,895],[1541,865,900],[1545,780,830],[1550,780,820],[1554,770,800],[1558,730,780],[1562,690,740],[1567,700,770],[1572,740,780],[1578,745,790],[1584,720,755],[1588,690,740],[1594,655,700],[1598,645,690],[1602,615,640],[1607,635,655],[1612,650,675],[1617,640,660],[1624,640,660],[1628,615,640],[1631,605,630],[1636,625,650],[1644,640,670],[1650,620,650],[1658,615,645],[1664,625,645],[1670,608,630],[1675,620,640],[1679,650,670],[1684,655,680],[1690,640,680],[1695,640,660],[1700,600,640],[1704,620,650],[1709,610,630],[1714,620,640],[1720,615,640],[1724,520,600],[1728,540,610],[1733,570,600],[1738,560,600],[1743,570,600],[1748,520,580],[1752,520,560],[1757,570,625],[1762,580,605],[1767,540,580],[1773,530,560],[1778,510,545],[1784,495,515],[1789,460,500],[1793,490,520],[1798,500,530],[1803,500,530],[1807,530,560],[1813,510,535],[1818,490,520],[1823,520,560],[1830,530,560],[1836,560,590],[1842,515,560],[1846,540,580],[1850,570,595],[1853,590,635]];

    let seed = 7;
    function rnd() {
      seed = (seed * 16807) % 2147483647;
      return seed / 2147483647;
    }

    let bear = '', bull = '', k = 0;
    for (let x = 8; x < 1853; x += 4 / 3) {
      while (range[k + 1][0] < x) k++;
      const [x0, h0, l0] = range[k], [x1, h1, l1] = range[k + 1];
      const t = (x - x0) / (x1 - x0);
      const high = h0 + (h1 - h0) * t, low = l0 + (l1 - l0) * t, size = low - high;
      let a = high + size * rnd() * 0.35, b = low - size * rnd() * 0.35;
      // now and then a long wick
      if (rnd() < 0.2) a = high - size * rnd() * 0.3;
      if (rnd() < 0.2) b = low + size * rnd() * 0.3;
      const falling = h1 + l1 > h0 + l0;
      const bar = 'M' + x.toFixed(1) + ' ' + a.toFixed(0) + 'V' + b.toFixed(0);
      if (rnd() < (falling ? 0.7 : 0.3)) bear += bar; else bull += bar;
    }
    // single spikes that stand clear of the averages
    bear += 'M365 490V585M659 360V414M685 293V340M806 594V690M809 617V660M911 700V822M1348 930V990M1440 764V820M1757 575V627M1818 487V530M1842 514V560M1851 580V635M311 256V300M427 298V350M437 270V330M418 400V470M349 380V438M193 230V276';
    bull += 'M366 550V610M217 205V292M415 380V440M813 690V762M493 257V300M638 305V370M1450 762V820M1567 687V770M1042 480V560M1046 452V520M912 760V823M1750 510V560';
    document.getElementById('bear').setAttribute('d', bear);
    document.getElementById('bull').setAttribute('d', bull);
  </script>
</body>
</html>
